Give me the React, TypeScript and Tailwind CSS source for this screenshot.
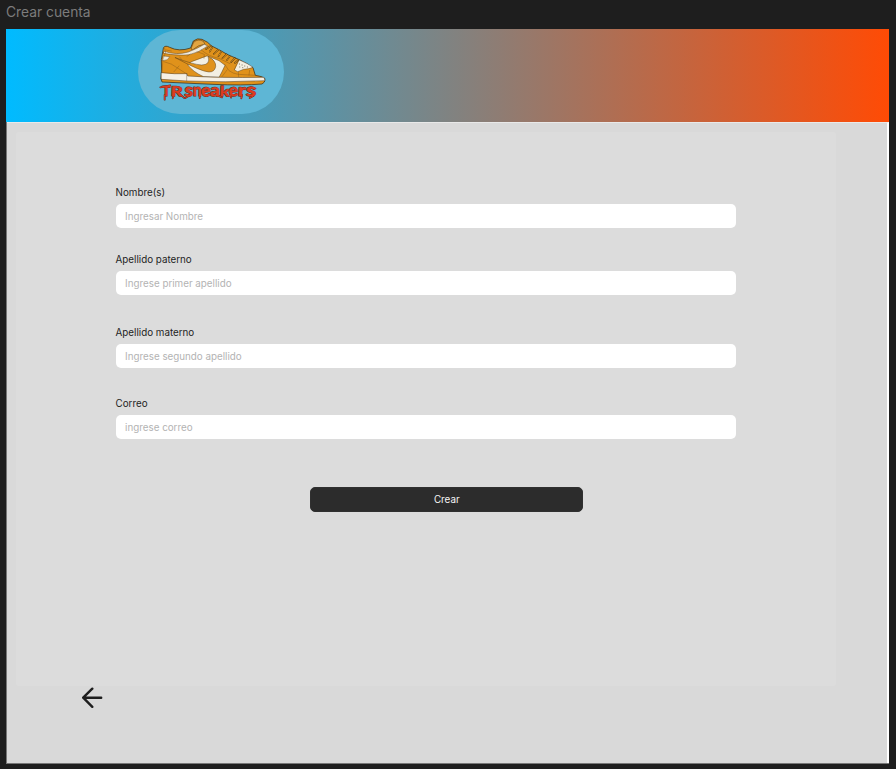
type FieldProps = { id: string; label: string; placeholder: string; className: string };

function Field({ id, label, placeholder, className }: FieldProps) {
  return (
    <div className={`flex flex-col gap-[3px] ${className}`}>
      <label htmlFor={id} className="h-4 text-[9.8px] leading-4 text-[#1e1e1e]">
        {label}
      </label>
      <input
        id={id}
        placeholder={placeholder}
        className="h-6 w-full rounded-[5px] bg-white px-[9.5px] pt-px text-[9.8px] leading-[23px] text-[#1e1e1e] outline-none placeholder:text-[#b3b3b3]"
      />
    </div>
  );
}

/* Each letter of the wordmark sits at its own place, tilt and size. */
const letters = [
  { c: "T", x: 97, y: 217, w: 25, s: 41, r: 0 },
  { c: "R", x: 123, y: 217, w: 36, s: 41, r: 2 },
  { c: "s", x: 164, y: 217, w: 26, s: 54, r: 5 },
  { c: "n", x: 189, y: 217, w: 27, s: 52, r: 0 },
  { c: "e", x: 214, y: 217, w: 29, s: 52, r: -8 },
  { c: "a", x: 241, y: 217, w: 29, s: 52, r: 4 },
  { c: "k", x: 270, y: 217, w: 29, s: 42, r: 3 },
  { c: "e", x: 297, y: 217, w: 28, s: 52, r: -7 },
  { c: "r", x: 324, y: 217, w: 24, s: 52, r: 3 },
  { c: "s", x: 349, y: 217, w: 31, s: 54, r: 5 },
];

const drips =
  "M92 190 L122 184 M105 213 L105 227 M132 213 L129 223 M151 211 L164 222 M178 215 L167 222 M210 212 L210 222 M265 215 L277 220 M302 212 L304 221 M337 213 L335 223 M371 216 L360 222";

const laces =
  "M228 76 L244 65 M240 83 L248 70 M252 90 L266 77 M266 97 L275 83 M278 103 L291 91 M291 109 L300 97 M304 115 L316 102 M315 118 L325 109";

function Logo() {
  return (
    <svg viewBox="25 18 438 252" className="h-full w-full" strokeLinejoin="round" strokeLinecap="round">
      {/* Shoe silhouette */}
      <path
        d="M102 70 Q107 63 120 70 Q148 84 183 72 L191 51 Q203 41 217 46 Q236 54 246 66 Q272 78 292 91 L329 107 Q350 117 370 131 L377 154 Q400 157 406 164 Q407 176 397 180 Q340 185 250 181 L97 174 L94 164 L96 146 L95 108 Z"
        fill="#e0921b"
        stroke="#3a2c17"
        strokeWidth="2.2"
      />
      {/* Collar lining and tongue */}
      <path d="M185 71 L192 55 Q205 43 221 52 L226 61 Q207 61 188 78 Z" fill="#e3a541" stroke="#3a2c17" strokeWidth="1.4" />
      <path d="M104 82 Q140 95 176 84 Q203 74 224 61 L234 66 Q204 88 178 92 Q145 96 102 88 Z" fill="#f1ebdc" stroke="#3a2c17" strokeWidth="1.2" />
      <path d="M101 96 L120 98 L113 107 L98 110 Z" fill="#f1ebdc" stroke="#3a2c17" strokeWidth="1" />
      {/* White side panels */}
      <path d="M184 114 L174 122 Q190 144 222 158 L268 160 Q276 146 286 124 L268 110 L233 96 Z" fill="#f3efe2" stroke="#3a2c17" strokeWidth="1.2" />
      {/* Swoosh */}
      <path d="M137 101 Q188 121 216 123 Q244 122 235 97 Q260 110 258 128 Q255 144 238 144 Q214 143 137 101 Z" fill="#e0921b" stroke="#3a2c17" strokeWidth="1.2" />
      {/* Toe box */}
      <path d="M329 108 Q357 119 370 130 Q359 135 342 136 L324 143 L315 138 Z" fill="#f3efe2" stroke="#3a2c17" strokeWidth="1.2" />
      <path d="M329 120h.5M337 123h.5M345 126h.5M353 129h.5M330 129h.5M339 131h.5" stroke="#3a2c17" strokeWidth="2" />
      {/* Midsole */}
      <path d="M95 146 Q137 151 172 149 L174 156 Q267 162 403 160 L406 170 Q287 176 172 171 L95 166 Z" fill="#f5f0e5" stroke="#3a2c17" strokeWidth="1.4" />
      <path d="M171 150 L171 170" fill="none" stroke="#3a2c17" strokeWidth="1" />
      {/* Stitching and creases */}
      <g fill="none" stroke="#7d541a" strokeWidth="1.2">
        <path d="M104 71 L108 84 L100 106 L97 141" />
        <path d="M103 113 Q127 118 145 133 L170 149" />
        <path d="M150 99 L157 108 M172 97 L181 91 M148 126 L133 143" />
        <path d="M285 121 L298 140 Q310 149 326 151 L376 154" />
        <path d="M277 158 L292 138 M326 143 L327 158 M360 139 L358 153" />
        <path d="M202 83 L224 91 L223 103 M109 78 L125 81" />
        <path d="M215 78 Q238 98 268 103 L301 119" />
      </g>
      {/* Laces */}
      <path d={laces} fill="none" stroke="#3a2c17" strokeWidth="4.2" />
      <path d={laces} fill="none" stroke="#e0921b" strokeWidth="2.8" />
      {/* Dripping wordmark */}
      <path d={drips} stroke="#6b2c24" strokeWidth="5.5" fill="none" />
      <g fontWeight="900" fill="#dc3c20" stroke="#6b2c24" strokeWidth="3" paintOrder="stroke" className="font-['Lato',sans-serif]">
        {letters.map((l) => (
          <text
            key={l.x}
            x={l.x}
            y={l.y}
            fontSize={l.s}
            textLength={l.w}
            lengthAdjust="spacingAndGlyphs"
            transform={`rotate(${l.r} ${l.x + l.w / 2} 203)`}
          >
            {l.c}
          </text>
        ))}
      </g>
      <path d={drips} stroke="#dc3c20" strokeWidth="3" fill="none" />
    </svg>
  );
}

export default function App() {
  return (
    <div className="h-[769px] w-[896px] overflow-hidden bg-[#1e1e1e] pl-[6px] font-['Inter',sans-serif]">
      <div className="h-[29px] text-[13.8px] leading-6 text-[#7c7c7c]">Crear cuenta</div>
      <main className="flex h-[735px] w-[883px] flex-col border-b border-l border-[#777] bg-[#d9d9d9]">
        <header className="-ml-px h-[93px] w-[883px] shrink-0 bg-linear-to-r/srgb from-[#00bbff] to-[#ff4b05] pt-px pl-[131.6px]">
          <div className="h-[84px] w-[146px] rounded-full bg-[#5eb6d5]">
            <Logo />
          </div>
        </header>
        <div className="flex-1 border-t border-r-2 border-t-[#e9e9e9] border-r-white pt-[9px] pl-[9px]">
          <form className="flex h-[554px] w-[820px] flex-col rounded-[3px] bg-[#dcdcdc] pt-[53px] pl-[99.6px]" onSubmit={(e) => e.preventDefault()}>
            <Field id="nombre" label="Nombre(s)" placeholder="Ingresar Nombre" className="w-[620px]" />
            <Field id="paterno" label="Apellido paterno" placeholder="Ingrese primer apellido" className="mt-6 w-[620px]" />
            <Field id="materno" label="Apellido materno" placeholder="Ingrese segundo apellido" className="mt-[30px] w-[620px]" />
            <Field id="correo" label="Correo" placeholder="ingrese correo" className="mt-7 w-[620px]" />
            <button className="mt-12 ml-[194.7px] h-[25px] w-[273px] rounded-[5px] border border-[#303030] bg-[#2c2c2c] pt-px text-[9.85px] leading-none text-[#f5f5f5]">
              Crear
            </button>
          </form>
          <button aria-label="Volver" className="ml-[65.5px] block h-6 w-[21px]">
            <svg viewBox="0 0 21 24" className="h-6 w-[21px]" fill="none" stroke="#1e1e1e" strokeWidth="2.4" strokeLinecap="round" strokeLinejoin="round">
              <path d="M19.2 11.7H1.2M10.3 2.7L1.2 11.7L10.3 20.8" />
            </svg>
          </button>
        </div>
      </main>
    </div>
  );
}
